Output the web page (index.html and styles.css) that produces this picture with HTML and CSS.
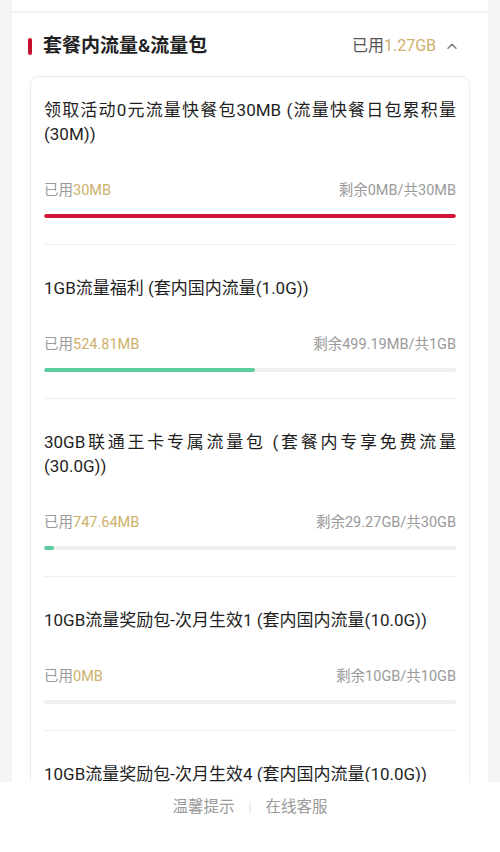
FILE: index.html
```html
<!DOCTYPE html>
<html lang="zh-CN">
<head>
<meta charset="utf-8">
<title>套餐内流量&amp;流量包</title>
<link rel="stylesheet" href="styles.css">
</head>
<body>
<div class="page">
  <main class="main">
    <div class="top-card"></div>
    <section class="card">
      <header class="card-head">
        <div class="head-left">
          <span class="accent"></span>
          <h2 class="head-title">套餐内流量&amp;流量包</h2>
        </div>
        <div class="head-right">
          <span class="head-used">已用<span class="gold">1.27GB</span></span>
          <svg class="chev" width="10" height="6" viewBox="0 0 10 6"><path d="M1 5.2 L5 1.2 L9 5.2" fill="none" stroke="#777" stroke-width="1.4" stroke-linecap="round" stroke-linejoin="round"/></svg>
        </div>
      </header>
      <div class="list">
        <div class="item first">
          <div class="title"><span class="jline">领取活动0元流量快餐包30MB (流量快餐日包累积量</span><span>(30M))</span></div>
          <div class="stats"><span>已用<span class="gold">30MB</span></span><span>剩余0MB/共30MB</span></div>
          <div class="track"><div class="fill red" style="width:100%"></div></div>
        </div>
        <div class="item">
          <div class="title">1GB流量福利 (套内国内流量(1.0G))</div>
          <div class="stats"><span>已用<span class="gold">524.81MB</span></span><span>剩余499.19MB/共1GB</span></div>
          <div class="track"><div class="fill green" style="width:51.2%"></div></div>
        </div>
        <div class="item">
          <div class="title"><span class="jline">30GB联通王卡专属流量包 (套餐内专享免费流量</span><span>(30.0G))</span></div>
          <div class="stats"><span>已用<span class="gold">747.64MB</span></span><span>剩余29.27GB/共30GB</span></div>
          <div class="track"><div class="fill green" style="width:2.4%"></div></div>
        </div>
        <div class="item">
          <div class="title">10GB流量奖励包-次月生效1 (套内国内流量(10.0G))</div>
          <div class="stats"><span>已用<span class="gold">0MB</span></span><span>剩余10GB/共10GB</span></div>
          <div class="track"></div>
        </div>
        <div class="item last">
          <div class="title">10GB流量奖励包-次月生效4 (套内国内流量(10.0G))</div>
        </div>
      </div>
    </section>
  </main>
  <footer class="footer">
    <span class="flink">温馨提示</span>
    <span class="fsep">|</span>
    <span class="flink">在线客服</span>
  </footer>
</div>
</body>
</html>
```
FILE: styles.css
```css
* { box-sizing: border-box; }
html, body { margin: 0; padding: 0; }
body {
  background: #f4f4f4;
  font-family: Roboto, "Noto Sans CJK SC", sans-serif;
  color: #1f1f1f;
}
.page {
  height: 852px;
  display: flex;
  flex-direction: column;
  overflow: hidden;
}
.main {
  flex: 1;
  overflow: hidden;
  padding: 0 12px;
}
.top-card {
  height: 11px;
  background: #fff;
  margin-bottom: 2px;
}
.card {
  background: #fff;
  padding: 0 18px 20px;
}
.card-head {
  display: flex;
  align-items: center;
  justify-content: space-between;
  padding: 22px 13px 19px 0;
  margin-left: -2px;
  height: 63px;
}
.head-left {
  display: flex;
  align-items: center;
}
.accent {
  width: 4px;
  height: 17px;
  border-radius: 2px;
  background: #c8102e;
  margin-right: 11px;
}
.head-title {
  margin: 0;
  font-size: 19px;
  line-height: 22px;
  font-weight: 600;
  color: #222;
}
.head-right {
  display: flex;
  align-items: center;
  gap: 11px;
}
.head-used {
  font-size: 16px;
  line-height: 22px;
  color: #555;
}
.chev { display: block; margin-top: -1px; }
.gold { color: #cdb06a; }
.list {
  border: 1px solid #ececec;
  border-radius: 8px;
  padding: 0 13px;
}
.item {
  padding: 31px 0 26px;
  border-top: 1px solid #eeeeee;
}
.item.first {
  border-top: none;
  padding-top: 21px;
}
.item.last {
  padding-bottom: 40px;
}
.title {
  font-size: 17px;
  line-height: 24px;
  color: #1f1f1f;
}
.jline {
  display: block;
  text-align: justify;
  text-align-last: justify;
}
.stats {
  margin-top: 35px;
  display: flex;
  justify-content: space-between;
  font-size: 14.5px;
  line-height: 20px;
  color: #9a9a9a;
}
.track {
  margin-top: 13px;
  height: 4px;
  border-radius: 2px;
  background: #efefef;
  overflow: hidden;
}
.fill {
  height: 100%;
  border-radius: 2px;
}
.fill.red { background: #d0163a; }
.fill.green { background: #5ccd9c; }
.footer {
  height: 70px;
  background: #fff;
  display: flex;
  justify-content: center;
  align-items: flex-start;
  padding-top: 14px;
  gap: 14px;
  font-size: 15.5px;
  line-height: 22px;
  color: #9a9a9a;
}
.fsep {
  color: #e2e2e2;
  font-size: 13px;
}
```
